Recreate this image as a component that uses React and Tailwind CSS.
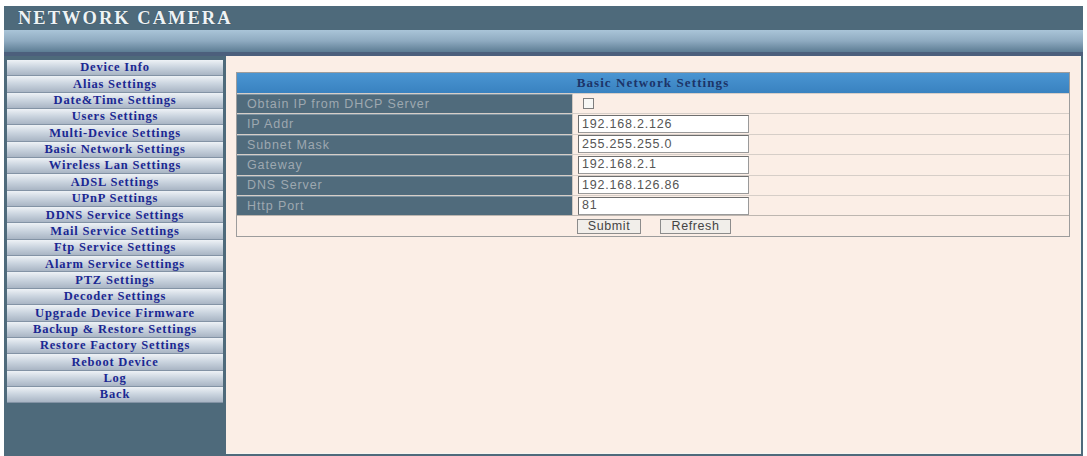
import React from "react";

const menu = [
  "Device Info",
  "Alias Settings",
  "Date&Time Settings",
  "Users Settings",
  "Multi-Device Settings",
  "Basic Network Settings",
  "Wireless Lan Settings",
  "ADSL Settings",
  "UPnP Settings",
  "DDNS Service Settings",
  "Mail Service Settings",
  "Ftp Service Settings",
  "Alarm Service Settings",
  "PTZ Settings",
  "Decoder Settings",
  "Upgrade Device Firmware",
  "Backup & Restore Settings",
  "Restore Factory Settings",
  "Reboot Device",
  "Log",
  "Back",
];

const rows = [
  { label: "Obtain IP from DHCP Server", check: true },
  { label: "IP Addr", value: "192.168.2.126" },
  { label: "Subnet Mask", value: "255.255.255.0" },
  { label: "Gateway", value: "192.168.2.1" },
  { label: "DNS Server", value: "192.168.126.86" },
  { label: "Http Port", value: "81" },
];

export default function App() {
  return (
    <div className="w-[1087px] h-[456px] bg-white overflow-hidden">
      <div className="ml-[4px] mt-[6px] w-[1079px] h-[450px] bg-[#4e6a7b] flex flex-col">
        {/* title band */}
        <div className="h-[24px] flex items-center pl-[14px]">
          <span
            className="text-[18.5px] font-bold tracking-[2px] text-[#eef3f5] leading-none"
            style={{ fontFamily: '"Liberation Serif", serif', textShadow: "0 0 1px #2e4452" }}
          >
            NETWORK CAMERA
          </span>
        </div>
        {/* gradient bar */}
        <div className="h-[22px] bg-gradient-to-b from-[#aac5d8] via-[#8eaac0] to-[#5d7d94]" />
        <div className="h-[4px] bg-[#4c5f7c]" />
        {/* main */}
        <div className="flex flex-1 pb-[2px]">
          <div className="w-[222px] pl-[3px] pt-[4px]">
            {menu.map((m) => (
              <div
                key={m}
                className="w-[216px] h-[16.35px] flex items-center justify-center border-b border-[#8393a5] bg-gradient-to-b from-[#eef2f6] via-[#c9d3de] to-[#a9b5c4] text-[12.5px] font-bold text-[#1b2892] leading-none tracking-[0.8px]"
                style={{ fontFamily: '"Liberation Serif", serif' }}
              >
                {m}
              </div>
            ))}
          </div>
          <div className="flex-1 mr-[2px] bg-[#fbeee6] border-r border-b border-[#f4f4f0] pt-[16px] pl-[10px]">
            <div className="w-[834px] border border-[#9c9c9c]">
              <div
                className="h-[20px] bg-gradient-to-b from-[#4a95d2] to-[#3982c0] flex items-center justify-center text-[13px] font-bold text-[#1c3468] tracking-[1.1px]"
                style={{ fontFamily: '"Liberation Serif", serif' }}
              >
                Basic Network Settings
              </div>
              {rows.map((r) => (
                <div key={r.label} className="flex h-[20.4px] border-t border-[#d6cec8]">
                  <div
                    className="w-[335px] bg-[#506b7c] border-t border-[#7d93a2] flex items-center pl-[10px] text-[12.5px] text-[#9ea8b0] tracking-[0.9px]"
                    style={{ fontFamily: '"Liberation Sans", sans-serif' }}
                  >
                    {r.label}
                  </div>
                  <div className="flex-1 flex items-center pl-[5px] border-l border-[#cfc7c0]">
                    {r.check ? (
                      <div className="ml-[5px] w-[11px] h-[11px] border border-[#7d7d7d] bg-[#f7f7f5]" />
                    ) : (
                      <div
                        className="w-[171px] h-[18px] bg-white border border-[#9a9a9a] border-t-[#6e6e6e] border-l-[#6e6e6e] flex items-center pl-[3px] text-[12.5px] text-[#555] tracking-[0.8px]"
                        style={{ fontFamily: '"Liberation Sans", sans-serif' }}
                      >
                        {r.value}
                      </div>
                    )}
                  </div>
                </div>
              ))}
              <div className="h-[20.4px] border-t border-[#bdb6b0] flex items-center pl-[340px] gap-[19px]">
                <div
                  className="w-[64px] h-[15px] bg-[#f1eeea] border border-[#8c8c8c] flex items-center justify-center text-[12.5px] text-[#444] tracking-[0.6px]"
                  style={{ fontFamily: '"Liberation Sans", sans-serif' }}
                >
                  Submit
                </div>
                <div
                  className="w-[71px] h-[15px] bg-[#f1eeea] border border-[#8c8c8c] flex items-center justify-center text-[12.5px] text-[#444] tracking-[0.6px]"
                  style={{ fontFamily: '"Liberation Sans", sans-serif' }}
                >
                  Refresh
                </div>
              </div>
            </div>
          </div>
        </div>
      </div>
    </div>
  );
}
